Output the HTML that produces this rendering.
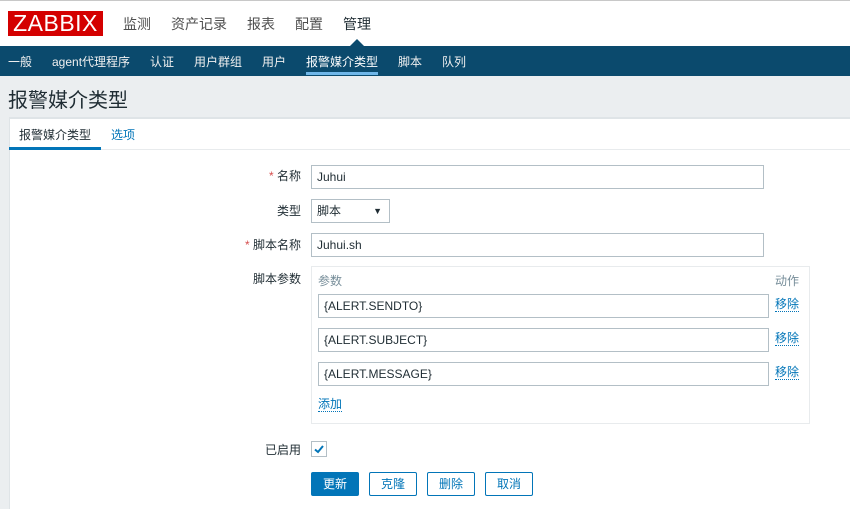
<!DOCTYPE html>
<html><head><meta charset="utf-8"><style>
*{box-sizing:border-box;margin:0;padding:0}
body{width:850px;height:509px;overflow:hidden;background:#ebeef0;font-family:"Liberation Sans","Noto Sans CJK SC",sans-serif;font-size:12px;color:#1f2c33;position:relative}
.a{position:absolute}
.top{left:0;top:0;width:850px;height:46px;background:#fff;border-top:1px solid #c8c8c8}
.logo{left:8px;top:11px;width:95px;height:25px;background:#d40000;color:#fff;font-size:23px;line-height:25px;text-align:center;letter-spacing:0.5px}
.mm{top:14px;font-size:14px;color:#4f4f4f}
.nav{left:0;top:46px;width:850px;height:30px;background:#0b4a6d}
.nv{top:53px;color:#f0f0f0;font-size:12px}
.inp{background:#fff;border:1px solid #b3bfc6;height:24px;padding-left:5px;line-height:22px;font-size:12px}
.lbl{width:120px;text-align:right;font-size:12px}
.lnk{color:#0275b8;border-bottom:1px dotted #0275b8;line-height:14px}
.btn{top:472px;height:24px;width:48px;border:1px solid #0275b8;border-radius:2px;text-align:center;line-height:22px;color:#0275b8;background:#fff}
</style></head><body>
<div class="a top"></div>
<div class="a logo">ZABBIX</div>
<div class="a mm" style="left:123px">监测</div>
<div class="a mm" style="left:171px">资产记录</div>
<div class="a mm" style="left:247px">报表</div>
<div class="a mm" style="left:295px">配置</div>
<div class="a mm" style="left:343px;color:#1f2c33">管理</div>
<div class="a" style="left:350px;top:39px;width:0;height:0;border-left:7px solid transparent;border-right:7px solid transparent;border-bottom:7px solid #0b4a6d"></div>
<div class="a nav"></div>
<div class="a nv" style="left:8px">一般</div>
<div class="a nv" style="left:52px">agent代理程序</div>
<div class="a nv" style="left:150px">认证</div>
<div class="a nv" style="left:194px">用户群组</div>
<div class="a nv" style="left:262px">用户</div>
<div class="a nv" style="left:306px;color:#fff">报警媒介类型</div>
<div class="a" style="left:306px;top:72px;width:72px;height:3px;background:#6fb6e8"></div>
<div class="a nv" style="left:398px">脚本</div>
<div class="a nv" style="left:442px">队列</div>
<div class="a" style="left:8px;top:84px;font-size:20px;color:#1f2c33">报警媒介类型</div>
<div class="a" style="left:9px;top:117px;width:841px;height:392px;background:#fff;border-top:2px solid #dfe4e7;border-left:1px solid #dfe4e7"></div>
<div class="a" style="left:9px;top:149px;width:841px;height:1px;background:#e8ebed"></div>
<div class="a" style="left:19px;top:126px">报警媒介类型</div>
<div class="a" style="left:9px;top:147px;width:92px;height:3px;background:#0275b8"></div>
<div class="a" style="left:111px;top:126px;color:#0275b8">选项</div>

<div class="a lbl" style="left:181px;top:167px"><span style="color:#d64e4e">*</span> 名称</div>
<div class="a inp" style="left:311px;top:165px;width:453px">Juhui</div>
<div class="a lbl" style="left:181px;top:202px">类型</div>
<div class="a inp" style="left:311px;top:199px;width:79px">脚本<span style="position:absolute;right:7px;font-size:9px">▼</span></div>
<div class="a lbl" style="left:181px;top:236px"><span style="color:#d64e4e">*</span> 脚本名称</div>
<div class="a inp" style="left:311px;top:233px;width:453px">Juhui.sh</div>
<div class="a lbl" style="left:181px;top:270px">脚本参数</div>
<div class="a" style="left:311px;top:266px;width:499px;height:158px;border:1px solid #e8ebed"></div>
<div class="a" style="left:318px;top:272px;color:#768d99">参数</div>
<div class="a" style="left:775px;top:272px;color:#768d99">动作</div>
<div class="a inp" style="left:318px;top:294px;width:451px">{ALERT.SENDTO}</div>
<div class="a lnk" style="left:775px;top:297px">移除</div>
<div class="a inp" style="left:318px;top:328px;width:451px">{ALERT.SUBJECT}</div>
<div class="a lnk" style="left:775px;top:331px">移除</div>
<div class="a inp" style="left:318px;top:362px;width:451px">{ALERT.MESSAGE}</div>
<div class="a lnk" style="left:775px;top:365px">移除</div>
<div class="a lnk" style="left:318px;top:397px">添加</div>
<div class="a lbl" style="left:181px;top:441px">已启用</div>
<div class="a" style="left:311px;top:441px;width:16px;height:16px;border:1px solid #b3bfc6;background:#fff"><svg width="14" height="14" viewBox="0 0 14 14"><path d="M3 7.5 L6 10 L11 4" stroke="#0275b8" stroke-width="2" fill="none"/></svg></div>
<div class="a btn" style="left:311px;background:#0275b8;color:#fff">更新</div>
<div class="a btn" style="left:369px">克隆</div>
<div class="a btn" style="left:427px">删除</div>
<div class="a btn" style="left:485px">取消</div>
</body></html>
